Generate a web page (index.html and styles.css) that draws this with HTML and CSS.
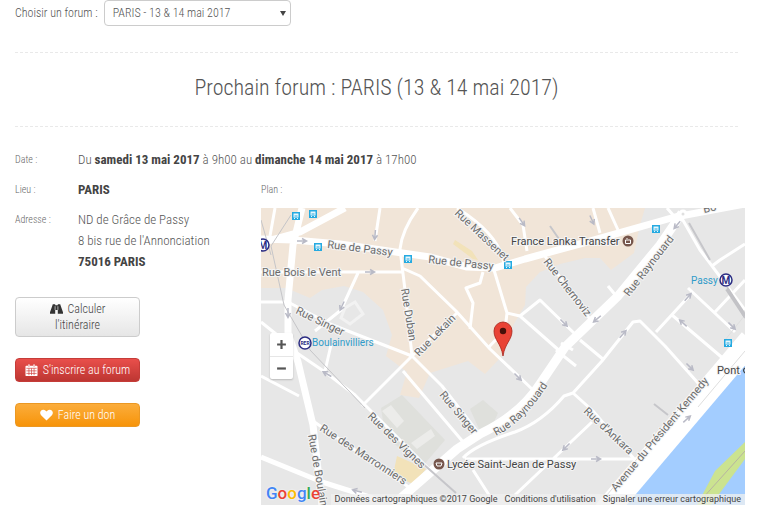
FILE: index.html
```
<!DOCTYPE html>
<html lang="fr">
<head>
<meta charset="utf-8">
<meta name="viewport" content="width=device-width, initial-scale=1">
<title>Prochain forum</title>
<link rel="stylesheet" href="styles.css">
</head>
<body>
<header class="top">
  <form class="chooser">
    <label for="forum">Choisir un forum :</label>
    <div class="select-wrap">
      <select id="forum"><option>PARIS - 13 &amp; 14 mai 2017</option></select>
    </div>
  </form>
  <h1>Prochain forum : PARIS (13 &amp; 14 mai 2017)</h1>
</header>
<main class="details">
  <dl class="info date">
    <dt>Date :</dt>
    <dd>Du <strong>samedi 13 mai 2017</strong> à 9h00 au <strong>dimanche 14 mai 2017</strong> à 17h00</dd>
  </dl>
  <section class="side">
    <dl class="info">
      <dt>Lieu :</dt>
      <dd><strong>PARIS</strong></dd>
      <dt>Adresse :</dt>
      <dd>ND de Grâce de Passy<br>8 bis rue de l'Annonciation<br><strong>75016 PARIS</strong></dd>
    </dl>
    <div class="actions">
      <button type="button" class="btn btn-light"><svg class="icon" viewBox="0 0 14 12" aria-hidden="true"><path fill="#333" d="M3 1h2.600v1h2.800V1H11l.7 2L14 9.500V11H8.400V7H5.600v4H0V9.500L2.300 3z"/><path stroke="#f4f4f4" stroke-width=".7" d="M5.500 3v4M8.500 3v4"/></svg>Calculer l'itinéraire</button>
      <button type="button" class="btn btn-red"><svg class="icon" viewBox="0 0 14 14" aria-hidden="true"><path fill="#fff" d="M1 2h2V.5h2V2h4V.5h2V2h2q1 0 1 1v10q0 1-1 1H1q-1 0-1-1V3q0-1 1-1z"/><path stroke="#d2413e" stroke-width=".8" d="M1 5h12M1 8h12M1 11h12M4 5v8M7 5v8M10 5v8"/><path stroke="#d2413e" stroke-width=".6" d="M4 1v2.500M10 1v2.500"/></svg>S'inscrire au forum</button>
      <button type="button" class="btn btn-orange"><svg class="icon" viewBox="0 0 14 12" aria-hidden="true"><path fill="#fff" d="M7 12L1.200 6.400C-.8 4 .2.500 3.600.300 5.200.200 6.400 1.400 7 2.300 7.600 1.400 8.800.200 10.400.300 13.800.500 14.800 4 12.800 6.400z"/></svg>Faire un don</button>
    </div>
  </section>
  <section class="plan">
    <h2>Plan :</h2>
    <div class="map">
      <svg class="canvas" viewBox="261 208 484 297" role="img" aria-label="Plan du quartier de Passy">
        <defs>
          <path id="arrow" d="M-5 0H3M0-2.500L4.500 0 0 2.500" fill="none" stroke="#b9bac6" stroke-width="1.500"/>
          <g id="bus"><rect x="-4" y="-4" width="8" height="8" fill="#25aae1"/><path fill="#e8f7fd" d="M-2.500-2.500h5v4h-5zM-2 2h1v1h-1zM1 2h1v1H1z"/><path stroke="#25aae1" d="M-1.500 0h3"/></g>
          <path id="raynouard" d="M496 436Q528 420 556 372"/>
        </defs>
        <path fill="#e7e7e7" d="M261 208h484v297H261z"/>
        <path fill="#f1e5d8" d="M261 208H645L640 225 634 253 611 270 600 258 585 258 560 264 540 272 526 287 525 305 511 329 501 357 485 374 468 361 430 373 419 398 400 395 407 372 386 356 392 335 383 310 363 292 344 286 322 290 310 298 286 288H261z"/>
        <path fill="#dfe0dc" d="M381 408L402 395 445 440 421 468 385 435zM470 409l13-9 15 13-9 20-9-2z"/>
        <path fill="#ececea" d="M382 411l9-6 13 16-7 7zM411 443l20-14 4 7-18 13z"/>
        <path fill="#f2e2b9" d="M397 456l29 13-13 15-20-9zM455 240l17 11 6 9-5-1-20-15z"/>
        <path fill="none" stroke="#f2f2f2" stroke-width="3" d="M345 308l10-6 8 12-13 10-9-6z"/>
        <path fill="#a3cdff" d="M745 363L701 410 632 488 616 505H745z"/>
        <path fill="#cbe390" d="M745 442L715 471 697 505H711L745 459z"/>
        <path fill="none" stroke="#b7b4a2" d="M745 451L702 499"/>
        <g class="roads thin">
          <path d="M275 208l-5 28M261 272H403M380 208l-5 33M418 208Q402 230 400 249L405 290 412 356M402 268L420 276 456 311 490 349 533 390M358 273L341 310 315 331M261 302H288L330 324 412 356 442 386 480 435M412 356L362 406M403 371L464 443M261 322L286 342M412 356L458 312M297 353L325 372 355 395 430 470M331 345l-6 26M261 376L299 396M313 421L410 488"/>
          <path d="M457 208Q500 235 504 264M510 208l13 17 4 26M494 270L507 313 520 316 540 300 578 337M520 316L562 353M507 313L505 330 488 348M542 252L592 322M593 208l7 25M608 208l10 22M483 272L480 283 466 288 473 303 470 329M667 208l7 8M680 215L700 250 745 310M712 266L720 260 745 244M715 312L745 280M608 286l9 11"/>
          <path d="M463 458Q475 445 515 432 542 422 564 396L573 393 602 361 633 322 640 321 665 346 706 392M656 332L690 295M688 288L735 332M672 315L732 366M573 393L593 411 635 460M561 343L573 350M515 495L592 422M465 459H637M473 470L491 498M580 340L604 360M556 350L576 366"/>
        </g>
        <g class="roads main">
          <path d="M302 208L293 245 288 300V333L298 362 313 425 322 505M261 239L293 240 340 244 430 257 467 267 495 268 525 259 587 242 675 217 745 204M261 243L300 232 345 208"/>
          <path d="M261 457L322 482 379 500" stroke-width="5"/>
          <path d="M682 213L660 245 618 296 565 347 540 384Q520 415 480 434L457 449 393 505" stroke-width="9"/>
        </g>
        <path fill="none" stroke="#fff" stroke-width="24" d="M751 340L605 512"/>
        <path fill="none" stroke="#dedede" d="M725 340l20-25M745 351L698 407M607 495L682 405"/>
        <path fill="none" stroke="#c5c5c8" stroke-width="1" d="M291 215L271 246 284 305 310 350 365 408M261 220l10 35"/>
        <path fill="none" stroke="#c6c6ca" stroke-width="2" d="M689 223L710 260M727 287L745 318M550 226l9 13M654 404l14 11M421 462l35 31"/>
        <path stroke="#c2c2c6" stroke-width="4" d="M727 289l18 27"/>
        <circle cx="683" cy="214" r="3" fill="#e0e0e0" stroke="#fff" stroke-width="3"/>
        <use href="#arrow" transform="translate(302 241)"/><use href="#arrow" transform="translate(370 272)"/><use href="#arrow" transform="translate(375 235) rotate(95)"/><use href="#arrow" transform="translate(342 306) rotate(115)"/><use href="#arrow" transform="translate(288 313) rotate(90)"/><use href="#arrow" transform="translate(522 222) rotate(55)"/><use href="#arrow" transform="translate(564 323) rotate(45)"/><use href="#arrow" transform="translate(592 220) rotate(65)"/><use href="#arrow" transform="translate(677 225) rotate(130)"/><use href="#arrow" transform="translate(597 319) rotate(140)"/><use href="#arrow" transform="translate(623 334) rotate(-48)"/><use href="#arrow" transform="translate(688 297) rotate(-48)"/><use href="#arrow" transform="translate(683 323) rotate(222)"/><use href="#arrow" transform="translate(732 326) rotate(45)"/><use href="#arrow" transform="translate(327 374) rotate(210)"/><use href="#arrow" transform="translate(357 491) rotate(195)"/><use href="#arrow" transform="translate(518 377) rotate(45)"/><use href="#arrow" transform="translate(566 447) rotate(135)"/><use href="#arrow" transform="translate(596 459)"/><use href="#arrow" transform="translate(690 367) rotate(45)"/><use href="#arrow" transform="translate(687 419) rotate(-42)"/>
        <use href="#bus" x="296" y="216"/><use href="#bus" x="313" y="214"/><use href="#bus" x="318" y="247"/><use href="#bus" x="408" y="259"/><use href="#bus" x="508" y="265"/><use href="#bus" x="656" y="229"/><use href="#bus" x="728" y="343"/>
        <g class="street">
          <text transform="translate(327 248) rotate(7)">Rue de Passy</text>
          <text transform="translate(428 263) rotate(6)">Rue de Passy</text>
          <text x="262" y="276">Rue Bois le Vent</text>
          <text transform="translate(295 313) rotate(26)">Rue Singer</text>
          <text transform="translate(401 289) rotate(81)">Rue Duban</text>
          <text transform="translate(419 357) rotate(-46)">Rue Lekain</text>
          <text transform="translate(454 214) rotate(43)">Rue Massenet</text>
          <text transform="translate(543 262) rotate(52)">Rue Chernoviz</text>
          <text transform="translate(629 297) rotate(-52)">Rue Raynouard</text>
          <text transform="translate(439 395) rotate(50)">Rue Singer</text>
          <text><textPath href="#raynouard">Rue Raynouard</textPath></text>
          <text transform="translate(367 417) rotate(44)">Rue des Vignes</text>
          <text transform="translate(319 430) rotate(33)">Rue des Marronniers</text>
          <text transform="translate(308 435) rotate(80)">Rue de Boulain</text>
          <text transform="translate(583 412) rotate(43)">Rue d'Ankara</text>
          <text transform="translate(616 492) rotate(-50)">Avenue du Président Kennedy</text>
          <text x="704" y="213" transform="rotate(-12 704 213)">Bo</text>
        </g>
        <g class="place">
          <text x="511" y="245">France Lanka Transfer</text>
          <text x="447" y="468">Lycée Saint-Jean de Passy</text>
          <text x="717" y="374">Pont</text>
        </g>
        <path fill="none" stroke="#444" stroke-width="1.200" d="M745 368q-3 2 0 5"/>
        <g class="station"><text x="312" y="346">Boulainvilliers</text><text x="691" y="284">Passy</text></g>
        <g fill="#fff" stroke="#2c2d83" stroke-width="1.500"><circle cx="263" cy="245" r="6"/><circle cx="726" cy="280" r="6"/><circle cx="305" cy="343" r="6"/></g>
        <g class="badge"><text x="263" y="249">M</text><text x="726" y="284">M</text><text class="rer" x="305" y="345">RER</text></g>
        <g fill="#76564c"><circle cx="628" cy="241" r="5.500"/><circle cx="439" cy="464" r="5.500"/></g>
        <path fill="none" stroke="#fff" d="M625.500 240h5v3.500h-5zM627 239v-1M436 463h6l-1 3h-4z"/>
        <path fill="#e94335" stroke="#a72219" stroke-width=".8" d="M503 356C501 343 494 340 494 331A9 9 0 0 1 512 331C512 340 505 343 503 356z"/>
        <circle cx="503" cy="331" r="3.200" fill="#471009"/>
      </svg>
      <div class="zoom"><button type="button" aria-label="Zoom avant"><svg viewBox="0 0 10 10"><path d="M1 5h8M5 1v8"/></svg></button><button type="button" aria-label="Zoom arrière"><svg viewBox="0 0 10 10"><path d="M1 5h8"/></svg></button></div>
      <a class="logo" href="#" aria-label="Google"><span class="b">G</span><span class="r">o</span><span class="y">o</span><span class="b">g</span><span class="g">l</span><span class="r">e</span></a>
      <div class="credits"><span>Données cartographiques ©2017 Google</span><a href="#">Conditions d'utilisation</a><a href="#">Signaler une erreur cartographique</a></div>
    </div>
  </section>
</main>
</body>
</html>
```
FILE: styles.css
```
* { box-sizing: border-box; }
body {
  margin: 0;
  background: #fff;
  color: #555;
  font: 13px/21px "Roboto Condensed Light", "Roboto Condensed", Roboto, sans-serif;
}
strong { color: #444; font-family: "Roboto Condensed", Roboto, sans-serif; font-weight: 700; }
button, select { font: inherit; }
.top { padding: 0 30px 0 15px; }
.chooser {
  display: flex;
  align-items: center;
  gap: 6px;
  height: 52px;
  padding-bottom: 26px;
  font-size: 12px;
}
.select-wrap { position: relative; width: 187px; }
.select-wrap::after {
  content: "";
  position: absolute;
  right: 5px;
  top: 11px;
  border: 3px solid transparent;
  border-top: 5px solid #444;
  border-bottom: 0;
}
.chooser select {
  display: block;
  appearance: none;
  width: 100%;
  height: 26px;
  padding: 0 8px;
  border: 1px solid #ccc;
  border-radius: 4px;
  background: #fff;
  color: #555;
}
h1 {
  margin: 0;
  padding: 18px 0 22px;
  border: 1px dashed #e9e9e9;
  border-width: 1px 0;
  color: #555;
  font-size: 22px;
  line-height: 33px;
  font-weight: 400;
  text-align: center;
}
.details {
  display: grid;
  grid-template-columns: 230px 1fr;
  column-gap: 16px;
  row-gap: 9px;
  padding: 22px 23px 20px 15px;
}
.info {
  display: grid;
  grid-template-columns: 63px 1fr;
  row-gap: 9px;
  margin: 0;
}
.date { grid-column: 1 / -1; }
.info dt { font-size: 10px; color: #666; }
.info dd { margin: 0; }
.actions {
  display: flex;
  flex-direction: column;
  gap: 21px;
  width: 125px;
  margin-top: 25px;
}
.btn {
  padding: 3px 8px;
  border: 1px solid #ccc;
  border-radius: 4px;
  font-size: 12px;
  line-height: 16px;
  text-align: center;
}
.btn-light { padding: 3px 30px; background: linear-gradient(#fff, #e6e6e6); color: #444; }
.btn-red { background: linear-gradient(#e94f4b, #bd3632); border-color: #c53c38; color: #fff; }
.btn-orange { background: linear-gradient(#fbad3c, #f79409); border-color: #eb9823; color: #fff; }
.icon { width: 13px; height: 12px; margin-right: 5px; vertical-align: -2px; }
.plan h2 { margin: 0 0 8px; color: #666; font-size: 10px; line-height: 21px; font-weight: 400; }
.map { position: relative; overflow: hidden; font-family: Roboto, sans-serif; }
.canvas { display: block; width: 100%; height: auto; }
.roads { fill: none; stroke: #fff; stroke-linejoin: round; }
.thin { stroke-width: 3; }
.main { stroke-width: 7; }
.street text, .place text { font-size: 11px; paint-order: stroke; stroke: #f4f4f4; stroke-width: 2px; }
.street text { fill: #6b6b6b; }
.place text { fill: #444; }
.station text { font-size: 10px; fill: #2f9bc9; }
.badge text { font-size: 10px; font-weight: 700; fill: #2c2d83; text-anchor: middle; }
.badge .rer { font-size: 5px; }
.zoom {
  position: absolute;
  left: 9px;
  top: 125px;
  width: 23px;
  border-radius: 2px;
  background: #fff;
  box-shadow: 0 1px 2px rgba(0, 0, 0, .2);
}
.zoom button { display: block; width: 100%; height: 23px; padding: 0 6px; border: 0; background: none; }
.zoom button + button { border-top: 1px solid #e6e6e6; }
.zoom svg { display: block; width: 11px; fill: none; stroke: #555; stroke-width: 2; }
.logo {
  position: absolute;
  left: 5px;
  bottom: 2px;
  font: 500 17px/20px Roboto, sans-serif;
  text-decoration: none;
  text-shadow: 0 0 2px #fff;
}
.b { color: #4285f4; }
.r { color: #ea4335; }
.y { color: #fbbc05; }
.g { color: #34a853; }
.credits {
  position: absolute;
  right: 0;
  bottom: 0;
  display: flex;
  gap: 7px;
  padding: 0 4px;
  background: rgba(240, 240, 240, .75);
  color: #444;
  font-size: 9px;
  line-height: 11px;
}
.credits a { color: inherit; text-decoration: none; }
```
